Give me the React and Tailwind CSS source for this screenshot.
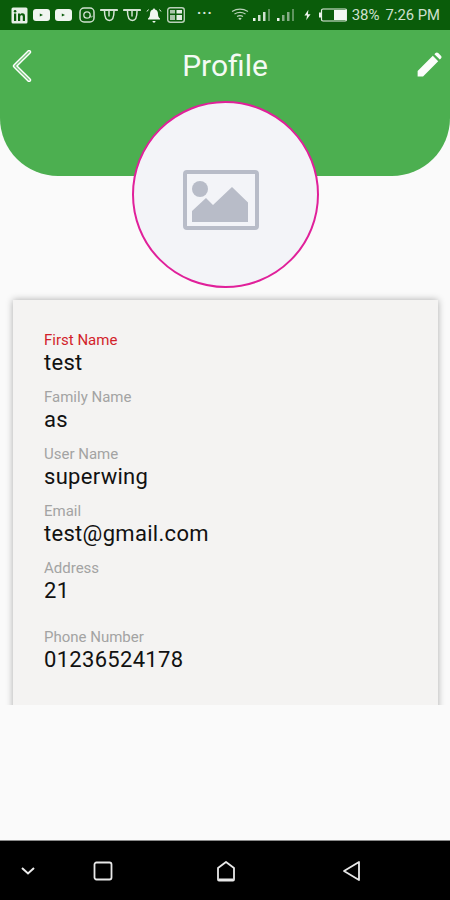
const font = { fontFamily: "Roboto, sans-serif" };

function Linked() {
  return (
    <svg width="17" height="17" viewBox="0 0 17 17">
      <rect x="0.5" y="0.5" width="16" height="16" rx="1.5" fill="#e6efe6" />
      <rect x="3" y="6.5" width="2.2" height="7.5" fill="#0b5c0b" />
      <circle cx="4.1" cy="4.3" r="1.3" fill="#0b5c0b" />
      <path d="M7 6.5h2.1v1.1c.5-.8 1.3-1.3 2.3-1.3 1.9 0 2.6 1.2 2.6 3.1V14h-2.2V9.8c0-1-.3-1.6-1.2-1.6-1 0-1.4.7-1.4 1.7V14H7z" fill="#0b5c0b" />
    </svg>
  );
}
function Yt() {
  return (
    <svg width="17" height="12" viewBox="0 0 17 12">
      <rect width="17" height="12" rx="3" fill="#f0f5f0" />
      <path d="M6.8 4.4l3.2 1.6-3.2 1.6z" fill="#0b5c0b" />
    </svg>
  );
}
function Insta() {
  return (
    <svg width="16" height="16" viewBox="0 0 16 16" fill="none" stroke="#cfe0cf">
      <rect x="1" y="1" width="14" height="14" rx="4" strokeWidth="1.5" />
      <circle cx="8" cy="8" r="3.2" strokeWidth="1.3" />
      <path d="M11.2 8v1.2c0 1.4 2 1.4 2-.4" strokeWidth="0.9" />
    </svg>
  );
}
function Cup() {
  return (
    <svg width="18" height="14" viewBox="0 0 18 14" fill="none" stroke="#d6e4d6" strokeWidth="1.5" strokeLinecap="round">
      <path d="M1 2h16" strokeWidth="2.2" />
      <path d="M4.5 3c0 5.5 1.8 9.5 5 9.5s4.5-4 4.5-9.5" />
      <path d="M9 3v5" />
    </svg>
  );
}
function Bell() {
  return (
    <svg width="16" height="16" viewBox="0 0 16 16" fill="#f1f6f1">
      <path d="M8 1.5c.7 0 1 .5 1 1 2 .5 3 2.200 3 4.500 0 2.500.7 3.500 2 4.500v1H2v-1c1.300-1 2-2 2-4.500 0-2.300 1-4 3-4.500 0-.5.3-1 1-1z" />
      <path d="M6.500 14h3c0 1-.7 1.700-1.500 1.700S6.500 15 6.500 14z" />
      <path d="M2.500 2.500L1 4.500M13.500 2.500L15 4.500" stroke="#f1f6f1" strokeWidth="1" />
    </svg>
  );
}
function News() {
  return (
    <svg width="18" height="16" viewBox="0 0 18 16">
      <rect x="0.7" y="0.7" width="16.600" height="14.600" rx="2.500" fill="none" stroke="#b9d0b9" strokeWidth="1.400" />
      <rect x="3" y="3" width="5" height="3.500" fill="#a9c4a9" />
      <rect x="9.500" y="3" width="5.500" height="3.500" fill="#e2ece2" />
      <rect x="3" y="8" width="5" height="5" fill="#a9c4a9" />
      <rect x="9.500" y="8" width="5.500" height="5" fill="#e2ece2" />
    </svg>
  );
}
function Wifi() {
  return (
    <svg width="18" height="14" viewBox="0 0 18 14" fill="none" stroke="#b9d2b9" strokeWidth="1.100">
      <path d="M1 3.500c5-3 11-3 16 0" />
      <path d="M3.500 6c3.500-2 7.500-2 11 0" />
      <path d="M6 8.500c2-1.200 4-1.200 6 0" />
      <path d="M7.800 11c.8-.5 1.600-.5 2.400 0" strokeWidth="1.500" />
    </svg>
  );
}
function Signal({ dim }) {
  const c = dim ? "#86ac86" : "#cfe0cf";
  return (
    <svg width="18" height="14" viewBox="0 0 18 14" fill={c}>
      <rect x="0" y="10" width="2.500" height="3" fill="#eef4ee" />
      <rect x="5" y="7" width="2.500" height="6" />
      <rect x="10" y="4" width="2.500" height="9" />
      <rect x="15" y="1" width="2" height="12" fill="#5f945f" />
    </svg>
  );
}
function Bolt() {
  return (
    <svg width="7" height="12" viewBox="0 0 8 12" fill="#eef4ee">
      <path d="M5 0L0.500 6.500H3.500L2.500 12 7.500 5H4.500z" />
    </svg>
  );
}
function Battery() {
  return (
    <svg width="28" height="14" viewBox="0 0 28 14">
      <rect x="0" y="4.500" width="2" height="5" fill="#eef4ee" />
      <rect x="2.500" y="1" width="25" height="12" rx="1.500" fill="#0b5c0b" stroke="#e6efe6" strokeWidth="1.200" />
      <rect x="15" y="2" width="12" height="10" fill="#f3f7f3" />
    </svg>
  );
}

function StatusBar() {
  return (
    <div className="h-[30px] bg-[#0a5c0a] flex items-center pl-[11px] pr-[10px] shrink-0">
      <div className="flex items-center gap-[5px]">
        <Linked />
        <Yt />
        <Yt />
        <div className="ml-[2px]"><Insta /></div>
        <Cup />
        <Cup />
        <Bell />
        <News />
      </div>
      <span className="ml-[12px] text-[#dce8dc] text-[14px] font-bold tracking-[1px] leading-none -mt-[5px]">···</span>
      <div className="ml-auto flex items-center">
        <Wifi />
        <div className="ml-[4px] flex items-center gap-[6px]">
          <Signal />
          <Signal dim />
        </div>
        <div className="ml-[9px]"><Bolt /></div>
        <div className="ml-[8px]"><Battery /></div>
        <span className="ml-[5px] text-[15px] text-[#cfe0cf]">38%</span>
        <span className="ml-[6px] text-[14.8px] text-[#cfe0cf]">7:26 PM</span>
      </div>
    </div>
  );
}

function Header() {
  return (
    <div className="h-[146px] bg-[#4caf50] rounded-b-[58px] shrink-0 flex items-start justify-between pl-[12px] pr-[8px] pt-[18px]">
      <svg width="20" height="32" viewBox="0 0 20 34" fill="none" className="mt-[2px]">
        <path d="M17.500 2L2.500 17l15 15" stroke="#ffffff" strokeWidth="4.500" strokeLinecap="round" strokeLinejoin="round" />
        <path d="M17.500 2L2.500 17l15 15" stroke="#7cc47f" strokeWidth="1.500" strokeLinecap="round" strokeLinejoin="round" />
      </svg>
      <span className="text-[#f4faf4] text-[30px] leading-[36px] translate-x-[1px]">Profile</span>
      <svg width="26" height="26" viewBox="0 0 24 24" fill="#fcfdfc" className="mt-[4px]">
        <path d="M1.500 22.500v-5L15.500 3.500l5 5-14 14zM17 2l1-1c.8-.8 1.700-.8 2.500 0l2.500 2.500c.8.800.8 1.700 0 2.500l-1 1z" />
      </svg>
    </div>
  );
}

function Avatar() {
  return (
    <div className="w-[187px] h-[187px] rounded-full border-2 border-[#e0209a] bg-[#f3f4f8] -mt-[75px] ml-[132px] relative flex items-center justify-center shrink-0">
      <svg width="76" height="62" viewBox="0 0 76 62" className="mt-[12px] mr-[9px]">
        <rect x="2" y="2" width="72" height="56" rx="2" fill="none" stroke="#b8bcc8" strokeWidth="4" />
        <circle cx="17" cy="19" r="8" fill="#b8bcc8" />
        <path d="M9 52V41l14-13 7 7 19-18 16 15.500V52z" fill="#b8bcc8" />
      </svg>
    </div>
  );
}

function Field({ label, value, red, className = "" }) {
  return (
    <div className={className}>
      <div className={`text-[15px] leading-[20px] ${red ? "text-[#d21f2b]" : "text-[#a3a3a3]"}`}>{label}</div>
      <div className="text-[22px] leading-[26px] text-[#111111] tracking-[0.3px]">{value}</div>
    </div>
  );
}

export default function App() {
  return (
    <div className="w-[450px] h-[900px] bg-[#fafafa] flex flex-col overflow-hidden" style={font}>
      <StatusBar />
      <Header />
      <Avatar />
      <div className="h-[417px] overflow-hidden pt-[12px] px-[12px] shrink-0">
        <div className="ml-[1px] w-[425px] h-[420px] bg-[#f4f3f2] shadow-[0_0_7px_rgba(0,0,0,0.32)] pt-[30px] pl-[31px] flex flex-col gap-[11px]">
          <Field label="First Name" value="test" red />
          <Field label="Family Name" value="as" />
          <Field label="User Name" value="superwing" />
          <Field label="Email" value="test@gmail.com" />
          <Field label="Address" value="21" />
          <Field label="Phone Number" value="01236524178" className="mt-[12px]" />
        </div>
      </div>
      <div className="flex-1" />
      <div className="h-[60px] bg-black border-t border-[#8a8a8a] flex items-center shrink-0 relative">
        <svg width="16" height="10" viewBox="0 0 16 10" fill="none" stroke="#ececec" strokeWidth="2" className="ml-[20px]">
          <path d="M2 2l6 5.500L14 2" />
        </svg>
        <svg width="20" height="20" viewBox="0 0 20 20" fill="none" stroke="#e8e8e8" strokeWidth="1.800" className="ml-[57px]">
          <rect x="1.500" y="1.500" width="17" height="17" rx="2" />
        </svg>
        <svg width="20" height="22" viewBox="0 0 20 22" fill="none" stroke="#e8e8e8" strokeWidth="1.800" strokeLinejoin="round" className="ml-[103px]">
          <path d="M2 8l8-6 8 6v11.500a1 1 0 0 1-1 1H3a1 1 0 0 1-1-1z" />
          <path d="M3 19.500h14" strokeWidth="2" />
        </svg>
        <svg width="20" height="22" viewBox="0 0 20 22" fill="none" stroke="#e8e8e8" strokeWidth="1.800" strokeLinejoin="round" className="ml-[106px]">
          <path d="M17 2v18L2 11z" />
        </svg>
      </div>
    </div>
  );
}
